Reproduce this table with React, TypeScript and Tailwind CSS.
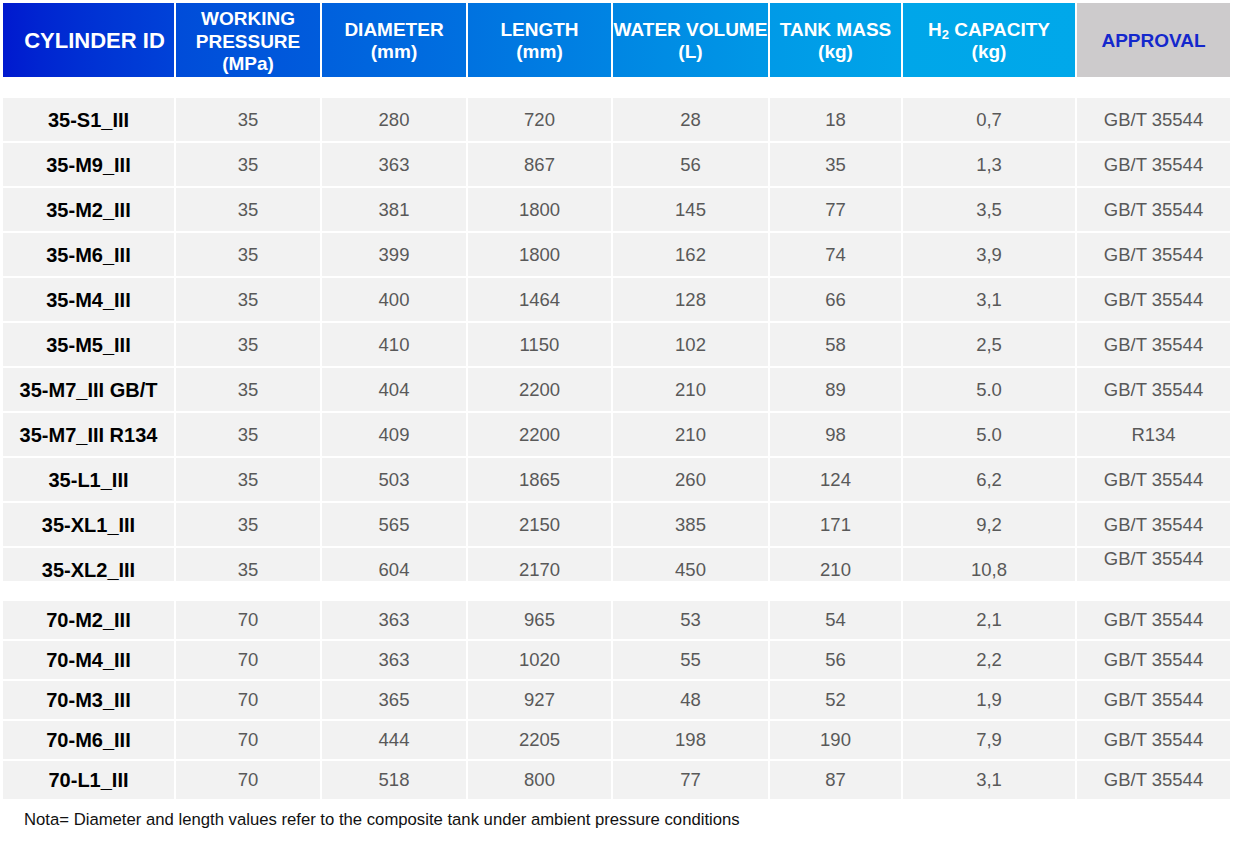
import React from "react";

const cols = "grid grid-cols-[171px_144px_144px_143px_155px_131px_172px_153px] gap-x-[2px]";

type Row = [string, string, string, string, string, string, string, string];

const group1: Row[] = [
  ["35-S1_III", "35", "280", "720", "28", "18", "0,7", "GB/T 35544"],
  ["35-M9_III", "35", "363", "867", "56", "35", "1,3", "GB/T 35544"],
  ["35-M2_III", "35", "381", "1800", "145", "77", "3,5", "GB/T 35544"],
  ["35-M6_III", "35", "399", "1800", "162", "74", "3,9", "GB/T 35544"],
  ["35-M4_III", "35", "400", "1464", "128", "66", "3,1", "GB/T 35544"],
  ["35-M5_III", "35", "410", "1150", "102", "58", "2,5", "GB/T 35544"],
  ["35-M7_III GB/T", "35", "404", "2200", "210", "89", "5.0", "GB/T 35544"],
  ["35-M7_III R134", "35", "409", "2200", "210", "98", "5.0", "R134"],
  ["35-L1_III", "35", "503", "1865", "260", "124", "6,2", "GB/T 35544"],
  ["35-XL1_III", "35", "565", "2150", "385", "171", "9,2", "GB/T 35544"],
];

const lastRow: Row = ["35-XL2_III", "35", "604", "2170", "450", "210", "10,8", "GB/T 35544"];

const group2: Row[] = [
  ["70-M2_III", "70", "363", "965", "53", "54", "2,1", "GB/T 35544"],
  ["70-M4_III", "70", "363", "1020", "55", "56", "2,2", "GB/T 35544"],
  ["70-M3_III", "70", "365", "927", "48", "52", "1,9", "GB/T 35544"],
  ["70-M6_III", "70", "444", "2205", "198", "190", "7,9", "GB/T 35544"],
  ["70-L1_III", "70", "518", "800", "77", "87", "3,1", "GB/T 35544"],
];

function DataRow({ row, h }: { row: Row; h: string }) {
  return (
    <div className={cols}>
      {row.map((v, i) => (
        <div
          key={i}
          className={`${h} flex items-center justify-center bg-[#f2f2f2] ${
            i === 0
              ? "font-bold text-[20px] text-black"
              : "text-[18.5px] text-[#595959]"
          }`}
        >
          {v}
        </div>
      ))}
    </div>
  );
}

function HeadCell({ cls, children }: { cls: string; children: React.ReactNode }) {
  return (
    <div
      className={`h-[74px] flex items-center justify-center text-center font-bold text-white text-[19px] leading-[22.5px] ${cls}`}
    >
      <div>{children}</div>
    </div>
  );
}

export default function App() {
  return (
    <div
      className="w-[1234px] h-[841px] bg-white pt-[3px] pl-[3px] overflow-hidden"
      style={{ fontFamily: '"Liberation Sans", Arial, sans-serif' }}
    >
      <div className={cols}>
        <HeadCell cls="bg-gradient-to-r from-[#0019cf] to-[#0042d8] pl-3 pt-[2px] text-[22px]">CYLINDER ID</HeadCell>
        <HeadCell cls="bg-gradient-to-r from-[#004cd9] to-[#005cdc] pt-[4px]">
          WORKING
          <br />
          PRESSURE
          <br />
          (MPa)
        </HeadCell>
        <HeadCell cls="bg-gradient-to-r from-[#0060dd] to-[#0070e0] pt-[2px]">
          DIAMETER
          <br />
          (mm)
        </HeadCell>
        <HeadCell cls="bg-gradient-to-r from-[#0072e0] to-[#0084e3] pt-[2px]">
          LENGTH
          <br />
          (mm)
        </HeadCell>
        <HeadCell cls="bg-gradient-to-r from-[#0086e3] to-[#0098e6] pt-[2px] whitespace-nowrap">
          WATER VOLUME
          <br />
          (L)
        </HeadCell>
        <HeadCell cls="bg-gradient-to-r from-[#009ae7] to-[#00a4e9] pt-[2px]">
          TANK MASS
          <br />
          (kg)
        </HeadCell>
        <HeadCell cls="bg-gradient-to-r from-[#00a6e9] to-[#00a8ea] pt-[2px]">
          H<sub className="text-[13px]">2</sub> CAPACITY
          <br />
          (kg)
        </HeadCell>
        <HeadCell cls="bg-[#cdcbcc] pt-[2px] !text-[#1428cc]">APPROVAL</HeadCell>
      </div>

      <div className="mt-[21px] flex flex-col gap-y-[2px]">
        {group1.map((r) => (
          <DataRow key={r[0]} row={r} h="h-[43px]" />
        ))}
        <div className={cols}>
          {lastRow.map((v, i) =>
            i === 7 ? (
              <div key={i} className="h-[33px] bg-[#f2f2f2] pt-[2px]">
                <div className="flex justify-center text-[18.5px] leading-[18px] text-[#595959]">{v}</div>
              </div>
            ) : (
              <div key={i} className="h-[33px] overflow-hidden bg-[#f2f2f2]">
                <div
                  className={`h-[43px] flex justify-center items-center ${
                    i === 0
                      ? "font-bold text-[20px] text-black"
                      : "text-[18.5px] text-[#595959]"
                  }`}
                >
                  {v}
                </div>
              </div>
            )
          )}
        </div>
      </div>

      <div className="mt-[20px] flex flex-col gap-y-[2px]">
        {group2.map((r) => (
          <DataRow key={r[0]} row={r} h="h-[38px]" />
        ))}
      </div>

      <div className="mt-[11px] pl-[21px] text-[16.7px] leading-[19px] text-[#111]">
        Nota= Diameter and length values refer to the composite tank under ambient pressure conditions
      </div>
    </div>
  );
}
